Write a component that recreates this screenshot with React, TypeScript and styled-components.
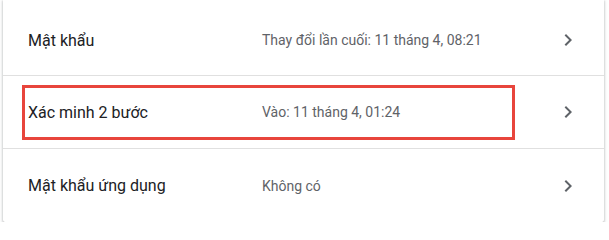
import React from "react";
import styled, { createGlobalStyle } from "styled-components";

const GlobalStyle = createGlobalStyle`
  html, body {
    margin: 0;
    padding: 0;
    background-color: #ffffff;
    font-family: Roboto, "Liberation Sans", Arial, sans-serif;
  }
`;

const Card = styled.div`
  margin: 0 5px 0 3px;
  width: 601px;
  background-color: #ffffff;
  border-radius: 0 0 2px 2px;
  box-shadow: 0 1px 2px rgba(60, 64, 67, 0.3), 0 1px 3px 1px rgba(60, 64, 67, 0.15);
`;

const Row = styled.div<{ $first?: boolean; $last?: boolean }>`
  position: relative;
  display: flex;
  align-items: center;
  box-sizing: border-box;
  height: ${(p) => (p.$first ? "76px" : "73px")};
  padding: ${(p) => (p.$first ? "5px 24px 0 25px" : "0 24px 0 25px")};
  border-bottom: ${(p) => (p.$last ? "none" : "1px solid #e0e0e0")};
  cursor: pointer;
`;

const Label = styled.div`
  width: 234px;
  flex-shrink: 0;
  font-size: 16px;
  color: #202124;
`;

const Value = styled.div`
  flex: 1;
  font-size: 14px;
  color: #5f6368;
`;

const Chevron = styled.svg`
  width: 24px;
  height: 24px;
  fill: #5f6368;
  flex-shrink: 0;
`;

const Highlight = styled.div`
  position: absolute;
  left: 19px;
  top: 9px;
  width: 493px;
  height: 55px;
  box-sizing: border-box;
  border: 3px solid #e8453c;
  pointer-events: none;
`;

type Item = { label: string; value: string; highlighted?: boolean };

const items: Item[] = [
  { label: "Mật khẩu", value: "Thay đổi lần cuối: 11 tháng 4, 08:21" },
  { label: "Xác minh 2 bước", value: "Vào: 11 tháng 4, 01:24", highlighted: true },
  { label: "Mật khẩu ứng dụng", value: "Không có" },
];

const ArrowRight = () => (
  <Chevron viewBox="0 0 24 24">
    <path d="M10 6L8.59 7.41 13.17 12l-4.58 4.59L10 18l6-6z" />
  </Chevron>
);

const App = () => (
  <>
    <GlobalStyle />
    <Card>
      {items.map((item, i) => (
        <Row key={item.label} $first={i === 0} $last={i === items.length - 1}>
          {item.highlighted && <Highlight />}
          <Label>{item.label}</Label>
          <Value>{item.value}</Value>
          <ArrowRight />
        </Row>
      ))}
    </Card>
  </>
);

export default App;
